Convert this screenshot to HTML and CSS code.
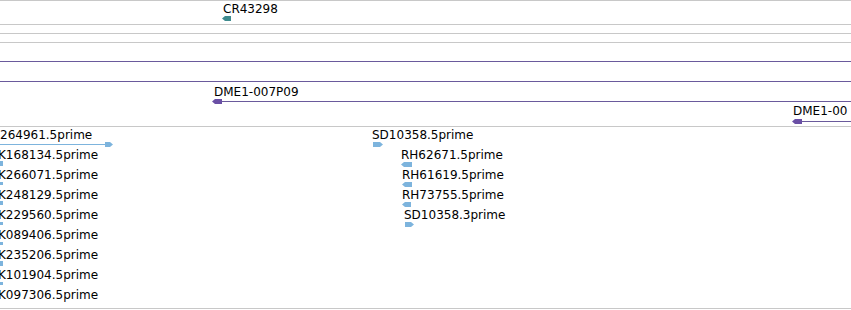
FILE: index.html
```html
<!DOCTYPE html>
<html lang="en">
<head>
  <meta charset="UTF-8" />
  <title>Tracks</title>
  <link rel="stylesheet" href="styles.css">
</head>
<body>
  <div class="view">
    <!-- ncRNA track -->
    <div class="track t-rna">
      <span class="label" style="left:223px;top:1px">CR43298</span>
      <svg class="glyph" style="left:222px;top:14px" width="10" height="7">
        <polygon class="teal" points="0,3.5 3,1 9,1 9,6 3,6" />
      </svg>
    </div>
    <div class="track t-empty"></div>
    <div class="track t-empty"></div>

    <!-- clone track -->
    <div class="track t-clones">
      <div class="hline purple" style="left:0;top:18px;width:851px"></div>
      <div class="hline purple" style="left:0;top:38px;width:851px"></div>
      <span class="label" style="left:214px;top:42px">DME1-007P09</span>
      <div class="hline purple" style="left:218px;top:58px;width:633px"></div>
      <svg class="glyph" style="left:212px;top:55px" width="11" height="7">
        <polygon class="violet" points="0,3.5 3,1 10,1 10,6 3,6" />
      </svg>
      <span class="label" style="left:793px;top:61px">DME1-00</span>
      <div class="hline purple" style="left:798px;top:78px;width:53px"></div>
      <svg class="glyph" style="left:792px;top:75px" width="11" height="7">
        <polygon class="violet" points="0,3.5 3,1 10,1 10,6 3,6" />
      </svg>
    </div>

    <!-- EST track -->
    <div class="track t-est">
      <span class="label" style="left:0;top:1px">264961.5prime</span>
      <div class="hline blue" style="left:0;top:17px;width:110px"></div>
      <svg class="glyph" style="left:105px;top:14px" width="9" height="7">
        <polygon class="sky" points="8,3.5 5,1 0,1 0,6 5,6" />
      </svg>

      <span class="label clip" style="top:21px">K168134.5prime</span>
      <div class="stub" style="top:34px;height:5px"></div>
      <span class="label clip" style="top:41px">K266071.5prime</span>
      <div class="stub" style="top:55px;height:3px"></div>
      <span class="label clip" style="top:61px">K248129.5prime</span>
      <div class="stub" style="top:74px;height:4px"></div>
      <span class="label clip" style="top:81px">K229560.5prime</span>
      <div class="stub" style="top:95px;height:3px"></div>
      <span class="label clip" style="top:101px">K089406.5prime</span>
      <div class="stub" style="top:115px;height:3px"></div>
      <span class="label clip" style="top:121px">K235206.5prime</span>
      <div class="stub" style="top:134px;height:5px"></div>
      <span class="label clip" style="top:141px">K101904.5prime</span>
      <div class="stub" style="top:155px;height:3px"></div>
      <span class="label clip" style="top:161px">K097306.5prime</span>

      <span class="label" style="left:372px;top:1px">SD10358.5prime</span>
      <svg class="glyph" style="left:373px;top:14px" width="11" height="7">
        <polygon class="sky" points="10,3.5 7,1 0,1 0,6 7,6" />
      </svg>
      <span class="label" style="left:401px;top:21px">RH62671.5prime</span>
      <svg class="glyph" style="left:401px;top:34px" width="12" height="7">
        <polygon class="sky" points="0,3.5 3,1 11,1 11,6 3,6" />
      </svg>
      <span class="label" style="left:402px;top:41px">RH61619.5prime</span>
      <svg class="glyph" style="left:402px;top:54px" width="11" height="7">
        <polygon class="sky" points="0,3.5 3,1 10,1 10,6 3,6" />
      </svg>
      <span class="label" style="left:402px;top:61px">RH73755.5prime</span>
      <svg class="glyph" style="left:402px;top:74px" width="10" height="7">
        <polygon class="sky" points="0,3.5 3,1 9,1 9,6 3,6" />
      </svg>
      <span class="label" style="left:404px;top:81px">SD10358.3prime</span>
      <svg class="glyph" style="left:405px;top:94px" width="10" height="7">
        <polygon class="sky" points="9,3.5 6,1 0,1 0,6 6,6" />
      </svg>
    </div>
  </div>
</body>
</html>
```
FILE: styles.css
```css
body {
  margin: 0;
  padding: 0;
  background-color: #fff;
  font-family: "DejaVu Sans", sans-serif;
  color: #000;
}
.view {
  width: 851px;
  height: 310px;
  overflow: hidden;
  border-top: 1px solid #c8c8c8;
  box-sizing: border-box;
}
.track {
  position: relative;
  border-bottom: 1px solid #c8c8c8;
}
.t-rna {
  height: 23px;
}
.t-empty {
  height: 8px;
}
.t-clones {
  height: 83px;
}
.t-est {
  height: 181px;
}
.label {
  position: absolute;
  font-size: 12px;
  line-height: 14px;
  white-space: nowrap;
}
.label.clip {
  left: -2px;
}
.glyph {
  position: absolute;
  display: block;
}
.hline {
  position: absolute;
  height: 1px;
}
.hline.purple {
  background-color: #6a5a9c;
}
.hline.blue {
  background-color: #7db4dd;
}
.stub {
  position: absolute;
  left: 0;
  width: 3px;
  background-color: #7db4dd;
}
.teal {
  fill: #3e8b8e;
}
.violet {
  fill: #6a4fa5;
}
.sky {
  fill: #7db4dd;
}
```
